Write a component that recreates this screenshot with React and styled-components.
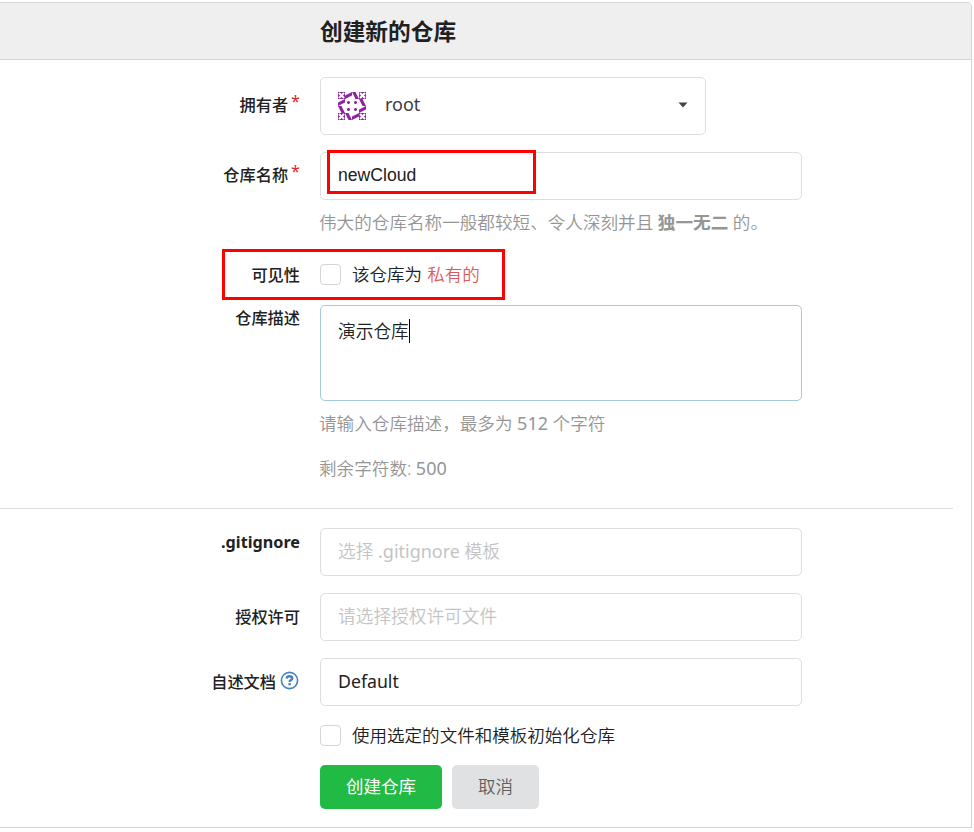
import React from 'react';
import styled, { createGlobalStyle } from 'styled-components';

const ui = '"Noto Sans", "Noto Sans CJK SC", sans-serif';

const Global = createGlobalStyle`
  * { box-sizing: border-box; }
  body { margin: 0; background: #fff; font-family: ${ui}; color: #212121; overflow: hidden; }
  strong { font-weight: 700; }
`;

const Panel = styled.main`
  width: 972px;
  height: 826px;
  margin-top: 2px;
  border: 1px solid #d4d4d5;
  border-left: 0;
  border-radius: 0 5px 0 0;
  overflow: hidden;
  display: flex;
  flex-direction: column;
`;

const Header = styled.h1`
  margin: 0;
  height: 57px;
  flex: none;
  padding-left: 320px;
  border-bottom: 1px solid #d4d4d5;
  background: #efefef;
  font-size: 22.7px;
  line-height: 58px;
`;

const Form = styled.form`
  display: flex;
  flex-direction: column;
`;

const Row = styled.div`
  position: relative;
  display: grid;
  grid-template-columns: 300px 482px;
  column-gap: 20px;
  align-items: start;
  margin-top: ${p => p.$gap || 0}px;
`;

const Label = styled.label`
  display: flex;
  justify-content: flex-end;
  padding-top: ${p => p.$top || 0}px;
  font-size: 16.2px;
  line-height: 24px;
  font-weight: ${p => (p.$bold ? 700 : 500)};
  white-space: nowrap;
`;

const Required = styled.span`
  color: #db2828;
  font-weight: 400;
  margin: -4px 0 0 3px;
`;

const Field = styled.div`
  display: flex;
  align-items: ${p => (p.$tall ? 'flex-start' : 'center')};
  width: ${p => p.$width || 482}px;
  height: ${p => p.$height || 48}px;
  padding: ${p => (p.$tall ? '12px' : '0')} 17px 2px;
  border: 1px solid ${p => (p.$focus ? '#a6c8dc' : '#dededf')};
  border-radius: 5px;
  background: #fff;
  font-size: 17.7px;
  line-height: 26px;
  font-weight: ${p => (p.$light ? 350 : 400)};
  color: ${p => (p.$placeholder ? '#c4c4c4' : '#212121')};
  white-space: pre;
`;

const Latin = styled.span`
  font-weight: 400;
  font-size: 18px;
`;

const NameText = styled.span`
  font-family: "Liberation Sans", Arial, sans-serif;
  font-size: 17.6px;
`;

const OwnerName = styled.span`
  flex: 1;
  margin: -2px 0 0 19px;
  font-size: 18px;
  color: #3c3c3c;
`;

const Caret = styled.span`
  width: 1px;
  height: 24px;
  margin-top: 1px;
  background: #000;
`;

const Help = styled.p`
  margin: ${p => p.$gap}px 0 0 319px;
  font-size: 17.6px;
  font-weight: 350;
  line-height: 26px;
  color: #959595;
  white-space: nowrap;
`;

const Choice = styled.div`
  display: flex;
  align-items: center;
  height: 26px;
  font-size: 17.55px;
  line-height: 24px;
  font-weight: 350;
  white-space: nowrap;
`;

const ChoiceText = styled.span`
  position: relative;
  padding-top: 1px;
  height: 26px;
`;

const Box = styled.span`
  width: 21px;
  height: 21px;
  margin-right: 11px;
  border: 1px solid #d4d4d5;
  border-radius: 4px;
`;

const Private = styled.span`
  margin-left: 5px;
  color: #d95c5c;
`;

const Divider = styled.hr`
  width: 953px;
  height: 1px;
  margin: 27px 0 0;
  border: 0;
  background: #dededf;
`;

const Actions = styled.div`
  display: flex;
  gap: 10px;
  margin: 17px 0 0 320px;
`;

const Button = styled.button`
  width: ${p => p.$width}px;
  height: 44px;
  padding: 0 0 3px;
  border: 0;
  border-radius: 5px;
  background: ${p => (p.$primary ? '#21ba45' : '#e0e1e2')};
  color: ${p => (p.$primary ? '#fff' : '#5f6061')};
  font-family: ${ui};
  font-size: 17.55px;
  font-weight: ${p => (p.$primary ? 400 : 350)};
`;

const Highlight = styled.div`
  position: absolute;
  left: ${p => p.$left}px;
  top: ${p => p.$top}px;
  width: ${p => p.$width}px;
  height: ${p => p.$height}px;
  border: 3px solid #fe0000;
`;

const HelpSvg = styled.svg`
  margin: 1px 1px 0 4px;
`;

const AvatarSvg = styled.svg`
  margin-top: 2px;
`;

function Avatar() {
  return (
    <AvatarSvg width="28" height="28" viewBox="0 0 28 28">
      {[0, 90, 180, 270].map(a => (
        <g key={a} transform={`rotate(${a} 14 14)`} fill="#8e24a0">
          <path d="M0 0h7v7H0z" />
          <path d="M1 1l5 5M6 1l-5 5" stroke="#fff" strokeWidth="2.1" />
          <path d="M7 3.5L14 0v3.5L7 7zM14 0h3.5L21 7h-3.5z" />
          <rect x="9" y="9.7" width="3" height="1.6" />
          <rect x="9.7" y="9" width="1.6" height="3" />
        </g>
      ))}
    </AvatarSvg>
  );
}

function HelpIcon() {
  return (
    <HelpSvg width="19" height="19" viewBox="0 0 19 19" fill="none" stroke="#4183c4">
      <circle cx="9.5" cy="9.5" r="8.1" strokeWidth="1.6" />
      <path d="M6.6 7.5C6.9 6 8 5.3 9.4 5.3c1.5 0 2.8.8 2.8 2.1 0 1.8-2.6 1.6-2.6 3.5" strokeWidth="2.4" />
      <path d="M8.4 13.2h2.4" strokeWidth="2.3" />
    </HelpSvg>
  );
}

export default function App() {
  return (
    <>
      <Global />
      <Panel>
        <Header>创建新的仓库</Header>
        <Form>
          <Row $gap={17}>
            <Label $top={16}>拥有者<Required>*</Required></Label>
            <Field $width={386} $height={58}>
              <Avatar />
              <OwnerName>root</OwnerName>
              <svg width="10" height="6" viewBox="0 0 10 6"><path d="M.5 .5h9L5 5.5z" fill="#444" /></svg>
            </Field>
          </Row>
          <Row $gap={17}>
            <Label $top={11}>仓库名称<Required>*</Required></Label>
            <Field><NameText>newCloud</NameText></Field>
            <Highlight $left={327} $top={-2} $width={209} $height={44} />
          </Row>
          <Help $gap={9}>伟大的仓库名称一般都较短、令人深刻并且 <strong>独一无二</strong> 的。</Help>
          <Row $gap={26}>
            <Label $top={2}>可见性</Label>
            <Choice><Box /><ChoiceText>该仓库为<Private>私有的</Private></ChoiceText></Choice>
            <Highlight $left={222} $top={-12} $width={283} $height={51} />
          </Row>
          <Row $gap={18}>
            <Label $top={1}>仓库描述</Label>
            <Field $height={96} $tall $focus $light>演示仓库<Caret /></Field>
          </Row>
          <Help $gap={9}>请输入仓库描述，最多为 <Latin>512</Latin> 个字符</Help>
          <Help $gap={19}>剩余字符数: <Latin>500</Latin></Help>
          <Divider />
          <Row $gap={19}>
            <Label $top={2} $bold>.gitignore</Label>
            <Field $placeholder $light>选择 <Latin>.gitignore</Latin> 模板</Field>
          </Row>
          <Row $gap={17}>
            <Label $top={12}>授权许可</Label>
            <Field $placeholder $light>请选择授权许可文件</Field>
          </Row>
          <Row $gap={17}>
            <Label $top={12}>自述文档<HelpIcon /></Label>
            <Field>Default</Field>
          </Row>
          <Row $gap={16}>
            <span />
            <Choice><Box /><ChoiceText>使用选定的文件和模板初始化仓库</ChoiceText></Choice>
          </Row>
          <Actions>
            <Button type="button" $primary $width={122}>创建仓库</Button>
            <Button type="button" $width={87}>取消</Button>
          </Actions>
        </Form>
      </Panel>
    </>
  );
}
